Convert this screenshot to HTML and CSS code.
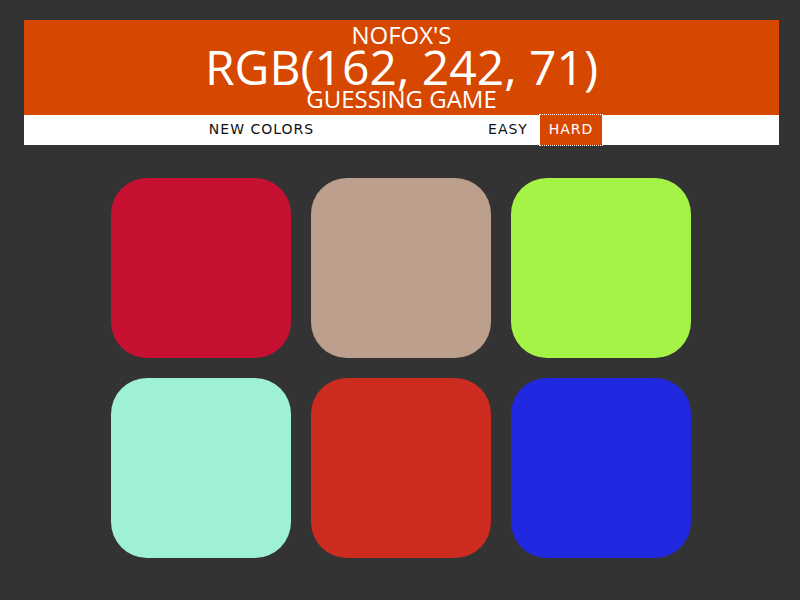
FILE: index.html
```html
<!DOCTYPE html>
<html>
<head>
<meta charset="utf-8">
<link rel="stylesheet" href="styles.css">
</head>
<body>
<header class="banner">
  <span class="banner-small">NOFOX'S</span>
  <span class="banner-big">RGB(162, 242, 71)</span>
  <span class="banner-small">GUESSING GAME</span>
</header>
<nav class="stripe">
  <button class="btn btn-new">NEW COLORS</button>
  <span class="message"></span>
  <button class="btn btn-easy">EASY</button>
  <button class="btn btn-selected">HARD</button>
</nav>
<main class="board">
  <div class="square" style="background: rgb(199, 17, 51)"></div>
  <div class="square" style="background: rgb(188, 159, 141)"></div>
  <div class="square" style="background: rgb(166, 243, 72)"></div>
  <div class="square" style="background: rgb(158, 241, 211)"></div>
  <div class="square" style="background: rgb(204, 43, 32)"></div>
  <div class="square" style="background: rgb(32, 41, 224)"></div>
</main>
</body>
</html>
```
FILE: styles.css
```css
html, body {
  margin: 0;
  padding: 0;
}
body {
  background: #333333;
  padding: 20px 21px 0 24px;
  font-family: "Open Sans", sans-serif;
}
.banner {
  background: #d64700;
  color: #ffffff;
  text-align: center;
  display: flex;
  flex-direction: column;
  align-items: center;
  height: 95px;
  box-sizing: border-box;
}
.banner-small {
  font-size: 24px;
  line-height: 30px;
  height: 30px;
  display: block;
}
.banner-big {
  font-size: 48px;
  line-height: 34px;
  height: 34px;
  display: block;
}
.stripe {
  background: #ffffff;
  height: 30px;
  display: flex;
  justify-content: center;
  align-items: stretch;
  gap: 4px;
}
.btn {
  border: none;
  background: #ffffff;
  color: #111111;
  font-family: "DejaVu Sans", sans-serif;
  font-size: 14px;
  letter-spacing: 1px;
  padding: 0 0 2px 0;
  margin: 0;
  height: 30px;
  box-sizing: border-box;
  text-transform: uppercase;
}
.btn-new {
  width: 121px;
}
.message {
  width: 150px;
}
.btn-easy {
  width: 56px;
}
.btn-selected {
  background: #d64700;
  color: #ffffff;
  outline: 1px dotted #ffffff;
  width: 62px;
}
.board {
  width: 600px;
  margin: 33px 78px 0 77px;
  display: flex;
  flex-wrap: wrap;
  justify-content: center;
  gap: 20px;
}
.square {
  width: 180px;
  height: 180px;
  border-radius: 36px;
}
```
